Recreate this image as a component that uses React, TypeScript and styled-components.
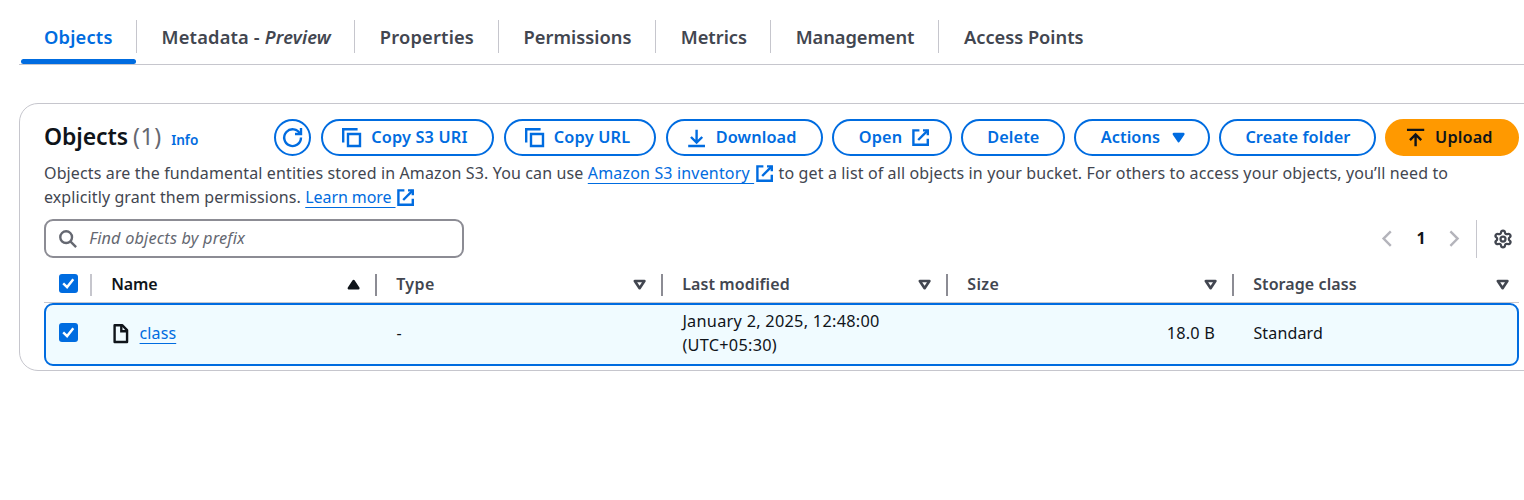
import React from 'react';
import styled, { createGlobalStyle, css } from 'styled-components';
import { Settings } from 'lucide-react';

const BLUE = '#006ce0';
const INK = '#0f141a';
const MUTED = '#424650';
const LINE = '#c6c6cd';
const EDGE = '#8c8c94';

const GlobalStyle = createGlobalStyle`
  *, *::before, *::after { box-sizing: border-box; }
  body {
    margin: 0;
    background: #fff;
    color: ${INK};
    font-family: "Noto Sans", "Open Sans", sans-serif;
    font-size: 16px;
    line-height: 24px;
  }
`;

const Page = styled.main`
  height: 500px;
  overflow: hidden;
  padding: 20px 0 0 19px;
`;

/* Tabs */

const TabBar = styled.nav`
  display: flex;
  height: 45px;
  padding-left: 2px;
  border-bottom: 1px solid ${LINE};
`;

const Tab = styled.div<{ $width?: number; $active?: boolean }>`
  flex: none;
  display: flex;
  flex-direction: column;
  justify-content: space-between;
  width: ${p => (p.$width ? `${p.$width}px` : 'auto')};
  color: ${p => (p.$active ? BLUE : MUTED)};
`;

const TabLabel = styled.div<{ $last?: boolean; $inset: number; $track: number }>`
  height: 33px;
  padding-left: ${p => p.$inset}px;
  border-right: ${p => (p.$last ? 'none' : `1px solid ${LINE}`)};
  font-size: 18.3px;
  font-weight: 600;
  line-height: 34px;
  letter-spacing: ${p => p.$track}px;
  white-space: nowrap;
`;

const TabMarker = styled.div`
  height: 5px;
  margin-right: 1px;
  border-radius: 2.5px;
  background: ${BLUE};
`;

/* Panel */

const Panel = styled.section`
  width: 1526px;
  height: 268px;
  margin-top: 38px;
  padding: 15px 25px 0 24px;
  border: 1px solid ${LINE};
  border-radius: 19px;
`;

const Header = styled.header`
  display: flex;
  justify-content: space-between;
  width: 1475px;
  height: 37px;
`;

const Title = styled.h2`
  display: flex;
  align-items: baseline;
  margin: 0;
  font-size: 23px;
  font-weight: 600;
  line-height: 35px;
  letter-spacing: -0.1px;
  white-space: nowrap;
`;

const Count = styled.span`
  margin-left: 5px;
  color: #656871;
  font-weight: 400;
  letter-spacing: 0.6px;
`;

const Info = styled.a`
  margin-left: 9.4px;
  color: ${BLUE};
  font-size: 13.6px;
  letter-spacing: 0;
`;

const Actions = styled.div`
  display: flex;
  gap: 9.4px;
`;

const Button = styled.button<{
  $width: number;
  $kind?: 'primary' | 'round';
  $iconSide?: 'left' | 'right';
  $track?: number;
}>`
  flex: none;
  display: flex;
  align-items: center;
  justify-content: ${p => (p.$iconSide ? 'flex-start' : 'center')};
  gap: ${p => (p.$iconSide === 'left' ? 9.8 : 8.8)}px;
  width: ${p => p.$width}px;
  height: 37px;
  padding: 0 0 0 ${p => (p.$iconSide === 'left' ? 19.1 : p.$iconSide === 'right' ? 24.6 : 1)}px;
  border: 2px solid ${BLUE};
  border-radius: 19px;
  background: #fff;
  color: ${BLUE};
  font-family: inherit;
  font-size: 16.3px;
  font-weight: 600;
  line-height: 24px;
  letter-spacing: ${p => p.$track ?? 0}px;
  white-space: nowrap;
  ${p =>
    p.$kind === 'primary' &&
    css`
      border-color: #ff9900;
      background: #ff9900;
      color: ${INK};
    `}
  ${p =>
    p.$kind === 'round' &&
    css`
      margin-right: 0.5px;
      padding: 0;
    `}
`;

const ButtonText = styled.span`
  padding-bottom: 2px;
`;

const Description = styled.p`
  width: 1440px;
  margin: 5px 0 0;
  color: ${MUTED};
  letter-spacing: 0.133px;
`;

const Closing = styled.span`
  letter-spacing: 0.1px;
`;

const Link = styled.a<{ $track?: number }>`
  color: ${BLUE};
  letter-spacing: ${p => p.$track ?? 0.1}px;
  text-decoration: underline;
  text-decoration-skip-ink: none;
  text-decoration-thickness: 1px;
  text-underline-offset: 4px;
  white-space: pre;
`;

const LinkIcon = styled.span`
  display: inline-flex;
  height: 19px;
  margin: 0 0.6px 0 0.4px;
  color: ${BLUE};
  vertical-align: -4px;
`;

/* Filter and paging */

const Tools = styled.div`
  display: flex;
  align-items: center;
  justify-content: space-between;
  width: 1475px;
  height: 39px;
  margin-top: 10px;
`;

const Search = styled.label`
  display: flex;
  align-items: center;
  gap: 12px;
  width: 420px;
  height: 39px;
  padding-left: 12px;
  border: 2px solid ${EDGE};
  border-radius: 9px;
  color: #656871;
`;

const Placeholder = styled.span`
  padding-bottom: 2px;
  font-size: 16.3px;
  font-style: italic;
  letter-spacing: 0.18px;
`;

const Paging = styled.div`
  display: flex;
  align-items: center;
  height: 38px;
  color: ${MUTED};
`;

const PageArrow = styled.span`
  display: flex;
  color: #b4b4bb;
`;

const PageNumber = styled.span`
  width: 49px;
  padding: 0 0 2px 1.5px;
  color: ${INK};
  font-weight: 700;
  text-align: center;
`;

const Preferences = styled.span`
  display: flex;
  align-items: center;
  height: 38px;
  margin-left: 11.6px;
  padding: 0 6.4px 0 16px;
  border-left: 1px solid ${LINE};
`;

/* Table */

const HeadRow = styled.div`
  display: grid;
  grid-template-columns: 48px 285px 286px 285px 286px 285px;
  align-items: center;
  width: 1475px;
  height: 45px;
  padding-top: 9px;
  border-bottom: 1px solid ${LINE};
`;

const HeadCell = styled.div<{ $rule?: string; $sorted?: boolean; $end?: number }>`
  display: flex;
  align-items: center;
  justify-content: space-between;
  height: 22px;
  padding: 0 ${p => p.$end ?? 12.2}px 0 19.2px;
  border-right: ${p => (p.$rule ? `2px solid ${p.$rule}` : 'none')};
  color: ${p => (p.$sorted ? INK : MUTED)};
`;

const HeadText = styled.span<{ $track?: number }>`
  padding-bottom: 2px;
  font-weight: 600;
  letter-spacing: ${p => p.$track ?? 0}px;
  white-space: nowrap;
`;

const HeadCheck = styled.div`
  display: flex;
  height: 22px;
  padding-left: 15px;
  border-right: 2px solid ${LINE};
`;

const SelectedRow = styled.div`
  display: grid;
  grid-template-columns: 46px 285px 286px 285px 286px 283px;
  align-items: center;
  width: 1475px;
  height: 63px;
  padding-bottom: 3px;
  border: 2px solid ${BLUE};
  border-radius: 9px;
  background: #f0fbff;
`;

const Cell = styled.div<{ $track?: number; $end?: boolean; $size?: number }>`
  display: flex;
  align-items: center;
  justify-content: ${p => (p.$end ? 'flex-end' : 'flex-start')};
  padding: 0 19px 0 19.4px;
  font-size: ${p => p.$size ?? 16}px;
  letter-spacing: ${p => p.$track ?? 0}px;
`;

const CheckCell = styled.div`
  padding: 0 0 1px 13px;
`;

const FileIcon = styled.span`
  display: flex;
  margin: 2px 9.8px 0 -0.8px;
`;

const Box = styled.span`
  display: flex;
  width: 19px;
  height: 19px;
  border-radius: 3px;
  background: ${BLUE};
`;

/* Icons, drawn on a 16-unit grid */

const shapes = {
  refresh: (
    <>
      <path d="M10 5h5V0" />
      <path d="M15 8a7 7 0 1 1-.7-3" />
    </>
  ),
  copy: (
    <>
      <path d="M15 5H5v10h10V5Z" />
      <path d="M13 1H1v11" />
    </>
  ),
  download: <path d="M1 15h14M8 1.5v10.5M3.3 7.5 8 12.2l4.7-4.7" />,
  upload: <path d="M.8 1.6h14.4M8 15.2V5.5M3.3 10.1 8 5.4l4.7 4.7" />,
  external: (
    <>
      <path d="M10 2h4v4" />
      <path d="m6 10 8-8" />
      <path d="M14 9.05V14H2V2h5" />
    </>
  ),
  caretDown: <path d="M4 5h8l-4 6-4-6Z" fill="currentColor" strokeLinejoin="round" />,
  caretUp: <path d="M4 11h8L8 5l-4 6Z" fill="currentColor" strokeLinejoin="round" />,
  sort: <path d="M4 5h8l-4 6-4-6Z" strokeWidth="2.2" strokeLinejoin="round" />,
  search: (
    <>
      <circle cx="6.8" cy="6.8" r="4.9" />
      <path d="m10.3 10.3 4.8 4.8" />
    </>
  ),
  left: <path d="m11.5 2-6 6 6 6" />,
  right: <path d="m4.5 2 6 6-6 6" />,
  file: (
    <>
      <path d="M9.3 1H3v14h10.4V5.1L9.3 1Z" strokeLinejoin="round" />
      <path d="M8.6 1v5h4.8" />
    </>
  ),
};

const Icon = ({ name }: { name: keyof typeof shapes }) => (
  <svg
    width="19.2"
    height="19.2"
    viewBox="0 0 16 16"
    fill="none"
    stroke="currentColor"
    strokeWidth="2"
    overflow="visible"
  >
    {shapes[name]}
  </svg>
);

const Checkbox = () => (
  <Box role="checkbox" aria-checked="true">
    <svg width="19" height="19" viewBox="0 0 19 19" fill="none" stroke="#fff" strokeWidth="2.4">
      <path d="m4.2 9.3 3.9 3.8 6.2-7.9" />
    </svg>
  </Box>
);

const tabs = [
  { label: 'Objects', width: 116, track: 0.22, inset: 22.9 },
  { label: 'Metadata - ', note: 'Preview', width: 218, track: 0.16, inset: 24.6 },
  { label: 'Properties', width: 144, track: 0.18, inset: 24.8 },
  { label: 'Permissions', width: 157, track: 0.02, inset: 24.6 },
  { label: 'Metrics', width: 115, track: -0.05, inset: 24.8 },
  { label: 'Management', width: 168, track: -0.08, inset: 24.7 },
  { label: 'Access Points', track: -0.03, inset: 25 },
];

const columns = [
  { label: 'Type', track: 0.4 },
  { label: 'Last modified', track: 0.1 },
  { label: 'Size', track: 0.4 },
];

export default function App() {
  return (
    <>
      <GlobalStyle />
      <Page>
        <TabBar>
          {tabs.map((t, i) => (
            <Tab key={t.label} $width={t.width} $active={i === 0}>
              <TabLabel $inset={t.inset} $track={t.track} $last={i === tabs.length - 1}>
                {t.label}
                {t.note && <em>{t.note}</em>}
              </TabLabel>
              {i === 0 && <TabMarker />}
            </Tab>
          ))}
        </TabBar>

        <Panel>
          <Header>
            <Title>
              Objects <Count>(1)</Count>
              <Info>Info</Info>
            </Title>
            <Actions>
              <Button $width={36.9} $kind="round" aria-label="Refresh">
                <Icon name="refresh" />
              </Button>
              <Button $width={173.2} $iconSide="left" $track={0.16}>
                <Icon name="copy" />
                <ButtonText>Copy S3 URI</ButtonText>
              </Button>
              <Button $width={152.6} $iconSide="left" $track={0.2}>
                <Icon name="copy" />
                <ButtonText>Copy URL</ButtonText>
              </Button>
              <Button $width={157.2} $iconSide="left" $track={0.1}>
                <Icon name="download" />
                <ButtonText>Download</ButtonText>
              </Button>
              <Button $width={119.4} $iconSide="right" $track={0.1}>
                <ButtonText>Open</ButtonText>
                <Icon name="external" />
              </Button>
              <Button $width={103.6} $track={0.1}>
                <ButtonText>Delete</ButtonText>
              </Button>
              <Button $width={135.8} $iconSide="right" $track={0.1}>
                <ButtonText>Actions</ButtonText>
                <Icon name="caretDown" />
              </Button>
              <Button $width={156.4} $track={0.08}>
                <ButtonText>Create folder</ButtonText>
              </Button>
              <Button $width={134} $kind="primary" $iconSide="left" $track={0.15}>
                <Icon name="upload" />
                <ButtonText>Upload</ButtonText>
              </Button>
            </Actions>
          </Header>

          <Description>
            Objects are the fundamental entities stored in Amazon S3. You can use{' '}
            <Link $track={0.17}>Amazon S3 inventory </Link>
            <LinkIcon>
              <Icon name="external" />
            </LinkIcon>{' '}
            to get a list of all objects in your bucket. For others to access your objects, you’ll need to{' '}
            <Closing>explicitly grant them permissions. </Closing>
            <Link $track={-0.08}>Learn more </Link>
            <LinkIcon>
              <Icon name="external" />
            </LinkIcon>
          </Description>

          <Tools>
            <Search>
              <Icon name="search" />
              <Placeholder>Find objects by prefix</Placeholder>
            </Search>
            <Paging>
              <PageArrow>
                <Icon name="left" />
              </PageArrow>
              <PageNumber>1</PageNumber>
              <PageArrow>
                <Icon name="right" />
              </PageArrow>
              <Preferences>
                <Settings size={20} strokeWidth={2.7} />
              </Preferences>
            </Paging>
          </Tools>

          <HeadRow>
            <HeadCheck>
              <Checkbox />
            </HeadCheck>
            <HeadCell $rule={EDGE} $sorted>
              <HeadText $track={-0.1}>Name</HeadText>
              <Icon name="caretUp" />
            </HeadCell>
            {columns.map(c => (
              <HeadCell key={c.label} $rule={EDGE}>
                <HeadText $track={c.track}>{c.label}</HeadText>
                <Icon name="sort" />
              </HeadCell>
            ))}
            <HeadCell $end={6.7}>
              <HeadText $track={0.08}>Storage class</HeadText>
              <Icon name="sort" />
            </HeadCell>
          </HeadRow>

          <SelectedRow>
            <CheckCell>
              <Checkbox />
            </CheckCell>
            <Cell>
              <FileIcon>
                <Icon name="file" />
              </FileIcon>
              <Link>class</Link>
            </Cell>
            <Cell>-</Cell>
            <Cell $size={16.3} $track={0.27}>
              January 2, 2025, 12:48:00
              <br />
              (UTC+05:30)
            </Cell>
            <Cell $size={16.3} $track={0.2} $end>
              18.0 B
            </Cell>
            <Cell $track={0.15}>Standard</Cell>
          </SelectedRow>
        </Panel>
      </Page>
    </>
  );
}
